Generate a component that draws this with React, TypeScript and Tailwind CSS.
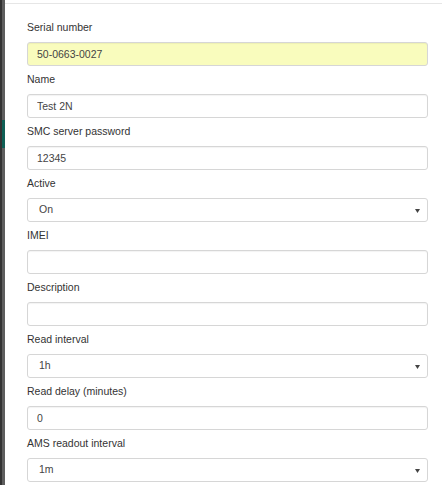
const fields = [
  { label: "Serial number", value: "50-0663-0027", type: "text", highlight: true },
  { label: "Name", value: "Test 2N", type: "text" },
  { label: "SMC server password", value: "12345", type: "text" },
  { label: "Active", value: "On", type: "select" },
  { label: "IMEI", value: "", type: "text" },
  { label: "Description", value: "", type: "text" },
  { label: "Read interval", value: "1h", type: "select" },
  { label: "Read delay (minutes)", value: "0", type: "text" },
  { label: "AMS readout interval", value: "1m", type: "select" },
];

function Field({ label, value, type, highlight }: any) {
  return (
    <div className="mb-[6px]">
      <label className="block h-[15px] leading-[15px] mb-[7px] text-[#333]">{label}</label>
      {type === "select" ? (
        <div className="h-[24px] flex items-center justify-between pl-[11px] pr-[7px] border border-[#d6d6d6] rounded-[3px] bg-white text-[#444]">
          <span>{value}</span>
          <svg width="5" height="4" viewBox="0 0 5 4" className="mt-[1px]">
            <path d="M0 0h5L2.5 4z" fill="#444" />
          </svg>
        </div>
      ) : (
        <input
          type="text"
          readOnly
          value={value}
          className={`block w-full h-[24px] px-[9px] border border-[#d6d6d6] rounded-[3px] text-[#444] outline-none shadow-[inset_0_1px_1px_rgba(0,0,0,0.05)] ${
            highlight ? "bg-[#f9fcbd]" : "bg-white"
          }`}
        />
      )}
    </div>
  );
}

export default function App() {
  return (
    <div className="w-[442px] h-[500px] bg-white flex items-start overflow-hidden font-['Liberation_Sans',Arial,sans-serif] text-[10.5px]">
      {/* backdrop edge behind the dialog */}
      <div className="w-[5px] h-[485px] flex flex-col border-l-2 border-[#333] bg-[#5e5e5e]">
        <div className="h-[120px]" />
        <div className="h-[28px] bg-[#0f5f55]" />
      </div>

      <div className="flex-1 pt-[3px]">
        <div className="border-t border-[#e6e6e6] pl-[22px] pr-[14px] pt-[16px]">
          <form>
            {fields.map((f) => (
              <Field key={f.label} {...f} />
            ))}
          </form>
        </div>
      </div>
    </div>
  );
}
